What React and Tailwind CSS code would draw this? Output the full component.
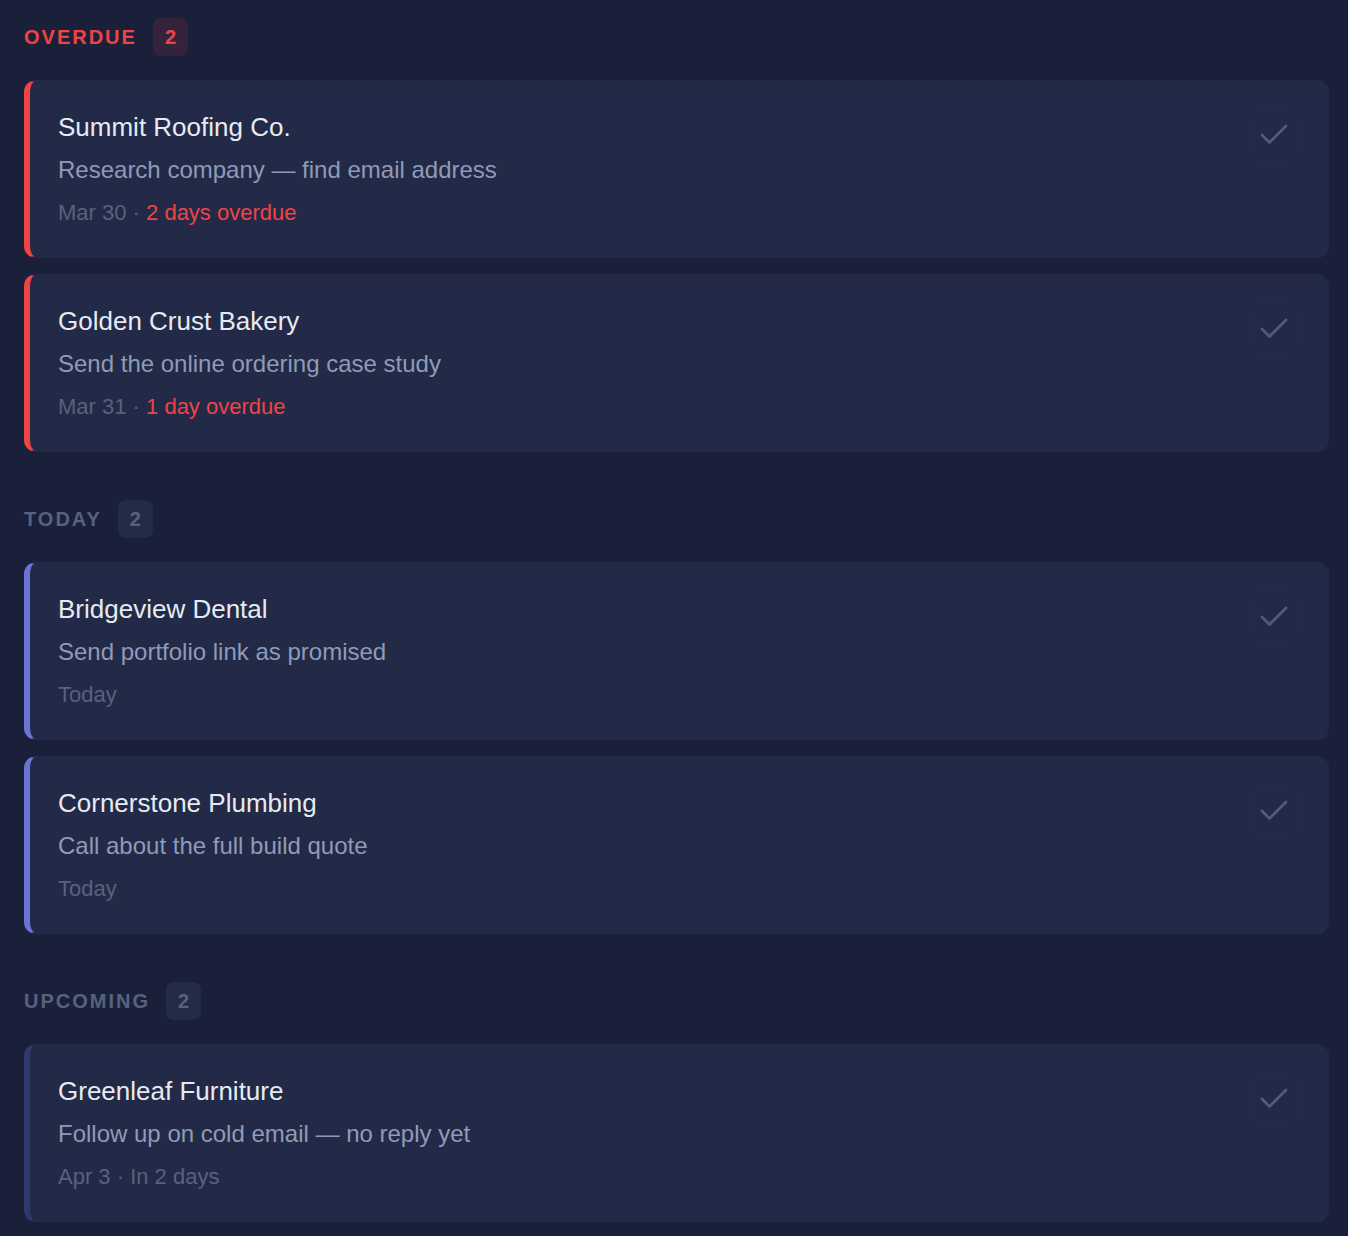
import React from "react";

const sections = [
  {
    key: "overdue",
    label: "OVERDUE",
    count: 2,
    labelCls: "text-[#ef4444]",
    badgeCls: "bg-[#35233d] text-[#ef4444]",
    borderCls: "border-l-[#ef4444] border-[#2a2746]",
    items: [
      { name: "Summit Roofing Co.", task: "Research company — find email address", date: "Mar 30", rel: "2 days overdue", red: true },
      { name: "Golden Crust Bakery", task: "Send the online ordering case study", date: "Mar 31", rel: "1 day overdue", red: true },
    ],
  },
  {
    key: "today",
    label: "TODAY",
    count: 2,
    labelCls: "text-[#56627f]",
    badgeCls: "bg-[#242b47] text-[#56627f]",
    borderCls: "border-l-[#6b74d4] border-[#242b4a]",
    items: [
      { name: "Bridgeview Dental", task: "Send portfolio link as promised", date: "Today" },
      { name: "Cornerstone Plumbing", task: "Call about the full build quote", date: "Today" },
    ],
  },
  {
    key: "upcoming",
    label: "UPCOMING",
    count: 2,
    labelCls: "text-[#56627f]",
    badgeCls: "bg-[#242b47] text-[#56627f]",
    borderCls: "border-l-[#2e3a6a] border-[#242b4a]",
    items: [
      { name: "Greenleaf Furniture", task: "Follow up on cold email — no reply yet", date: "Apr 3", rel: "In 2 days" },
    ],
  },
];

function CheckIcon() {
  return (
    <svg width="36" height="36" viewBox="0 0 24 24" fill="none" stroke="#4d5c80" strokeWidth="1.8" strokeLinecap="round" strokeLinejoin="round">
      <path d="M20 6 9 17l-5-5" />
    </svg>
  );
}

function Card({ item, borderCls }) {
  return (
    <div className={`flex items-start rounded-[12px] border border-l-[6px] bg-[#222a48] p-7 ${borderCls}`}>
      <div className="flex-1 min-w-0">
        <div className="text-[26px] leading-[36px] text-[#e6eaf2]">{item.name}</div>
        <div className="mt-2 text-[24px] leading-[34px] text-[#8f9ab8]">{item.task}</div>
        <div className="mt-[10px] text-[22px] leading-[32px] text-[#56627f]">
          {item.date}
          {item.rel && (
            <>
              {" · "}
              <span className={item.red ? "text-[#ef4444]" : ""}>{item.rel}</span>
            </>
          )}
        </div>
      </div>
      <button className="flex h-[52px] w-[52px] items-center justify-center rounded-[12px] border border-[#232b4a] bg-transparent">
        <CheckIcon />
      </button>
    </div>
  );
}

export default function App() {
  return (
    <div
      className="min-h-screen bg-[#1b203a] pl-6 pr-[19px] pt-[18px] pb-[14px]"
      style={{ fontFamily: '"Liberation Sans", Arial, Helvetica, sans-serif' }}
    >
      <div className="flex flex-col gap-12">
        {sections.map((s) => (
          <section key={s.key}>
            <div className="mb-6 flex items-center gap-4">
              <span className={`text-[20px] font-bold tracking-[0.1em] leading-[24px] ${s.labelCls}`}>{s.label}</span>
              <span className={`rounded-[8px] px-3 py-[7px] text-[20px] font-bold leading-[24px] ${s.badgeCls}`}>
                {s.count}
              </span>
            </div>
            <div className="flex flex-col gap-4">
              {s.items.map((it) => (
                <Card key={it.name} item={it} borderCls={s.borderCls} />
              ))}
            </div>
          </section>
        ))}
      </div>
    </div>
  );
}
